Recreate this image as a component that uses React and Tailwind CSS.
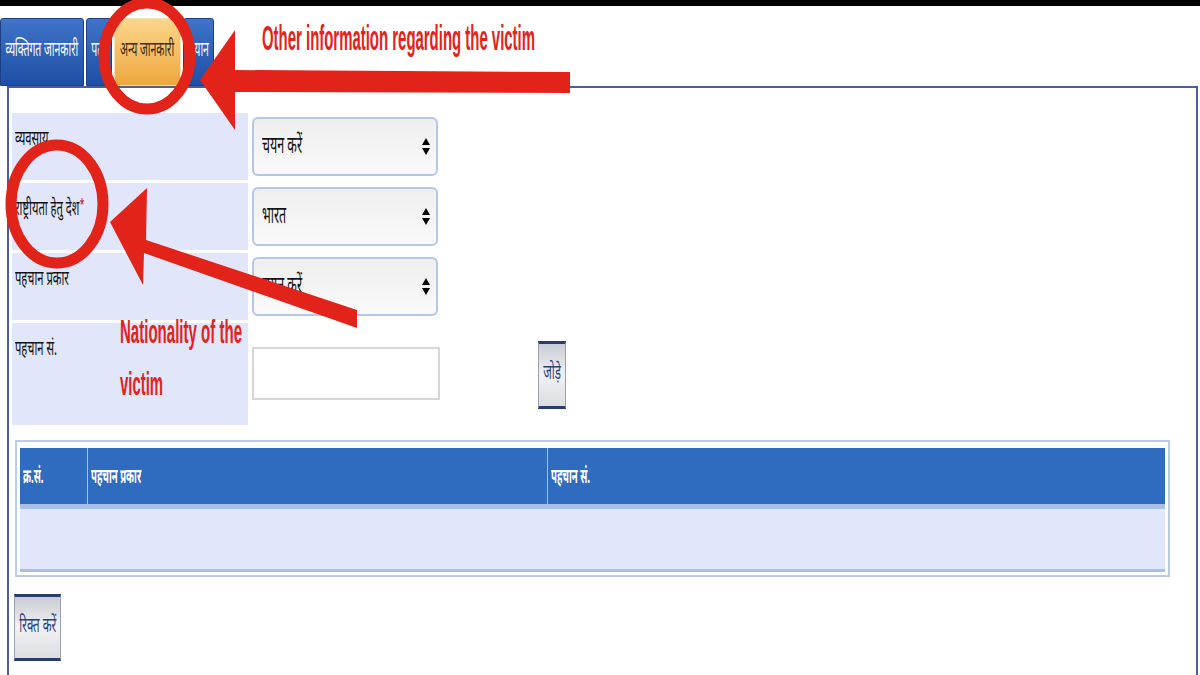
import React from 'react';

const dev = "font-['Noto_Sans_Devanagari','Lohit_Devanagari','Noto_Sans',sans-serif]";

// the capture is squeezed sideways, so Devanagari text is narrowed
function Dv({ children, center, k = 'scale-x-[0.6]' }) {
  return (
    <span className={`inline-block whitespace-nowrap ${k} ${center ? 'origin-center' : 'origin-left'}`}>
      {children}
    </span>
  );
}

function Tab({ label, active, width }) {
  return (
    <div
      className={`${width} h-[68px] shrink-0 flex items-center justify-center rounded-t-[3px] border border-[#1d3f86] text-[21px] overflow-hidden ${dev} ${
        active
          ? 'bg-gradient-to-b from-[#fbd68a] to-[#eea73a] text-[#3a2a10] border-[#f4e2b8]'
          : 'bg-gradient-to-b from-[#3f74c8] to-[#1e4fa6] text-white'
      }`}
    >
      <Dv center k="scale-x-[0.5]">{label}</Dv>
    </div>
  );
}

function SelectBox({ value }) {
  return (
    <div className="mt-[4px] ml-[4px] w-[186px] h-[59px] rounded-[6px] border-2 border-[#b4c8e6] bg-gradient-to-b from-[#eeeeee] to-[#fafafa] flex items-center justify-between pl-[8px] pr-[6px]">
      <span className={`text-[24px] text-[#111] ${dev}`}>
        <Dv k="scale-x-[0.52]">{value}</Dv>
      </span>
      <span className="flex flex-col items-center gap-[3px]">
        <span className="w-0 h-0 border-l-[4px] border-r-[4px] border-b-[7px] border-l-transparent border-r-transparent border-b-black" />
        <span className="w-0 h-0 border-l-[4px] border-r-[4px] border-t-[7px] border-l-transparent border-r-transparent border-t-black" />
      </span>
    </div>
  );
}

function Label({ children, tall }) {
  return (
    <div className={`w-[236px] shrink-0 ${tall ? 'h-[102px]' : 'h-[67px]'} bg-[#e1e6fa] pl-[3px] pt-[12px] text-[20px] text-[#111] ${dev}`}>
      <Dv k="scale-x-[0.56]">{children}</Dv>
    </div>
  );
}

function GrayButton({ label, className }) {
  return (
    <div
      className={`${className} shrink-0 flex items-center justify-center overflow-hidden border-x border-[#9aa0b0] border-y-[3px] border-y-[#2a3c6e] bg-gradient-to-b from-[#c9ccd4] via-[#f2f2f4] to-[#dcdde2] text-[21px] text-[#2a3f7a] ${dev}`}
    >
      <Dv center k="scale-x-[0.55]">{label}</Dv>
    </div>
  );
}

function Annotations() {
  const red = '#e2231a';
  const font = 'Liberation Sans Narrow, Liberation Sans, sans-serif';
  return (
    <svg className="absolute left-0 top-0 pointer-events-none" width="1200" height="675" viewBox="0 0 1200 675">
      {/* circle round the tab */}
      <ellipse cx="147" cy="56" rx="43" ry="53" fill="none" stroke={red} strokeWidth="11" />
      {/* arrow to the tab */}
      <polygon points="200,80 235,30 235,70 570,72 570,93 235,92 235,130" fill={red} />
      <text x="262" y="50" textLength="273" lengthAdjust="spacingAndGlyphs" fill={red} fontSize="35" fontWeight="700" fontFamily={font}>
        Other information regarding the victim
      </text>
      {/* circle round the label */}
      <ellipse cx="57" cy="204" rx="46" ry="59" fill="none" stroke={red} strokeWidth="11" />
      {/* arrow to the label */}
      <polygon points="110,222 147,188 146,240 357,310 357,328 144,253 143,285" fill={red} />
      <text x="120" y="343" textLength="122" lengthAdjust="spacingAndGlyphs" fill={red} fontSize="34" fontWeight="700" fontFamily={font}>
        Nationality of the
      </text>
      <text x="120" y="395" textLength="43" lengthAdjust="spacingAndGlyphs" fill={red} fontSize="34" fontWeight="700" fontFamily={font}>
        victim
      </text>
    </svg>
  );
}

export default function App() {
  return (
    <div className="relative w-[1200px] h-[675px] overflow-hidden bg-white">
      <div className="h-[6px] bg-black" />

      {/* tabs */}
      <div className="mt-[12px] h-[68px] flex items-end gap-[2px]">
        <Tab label="व्यक्तिगत जानकारी" width="w-[84px]" />
        <Tab label="पता" width="w-[26px]" />
        <Tab label="अन्य जानकारी" active width="w-[67px]" />
        <Tab label="बयान" width="w-[31px]" />
      </div>

      {/* panel */}
      <div className="ml-[7px] mr-[2px] h-[589px] border-x-2 border-t-2 border-[#4d5c9c] pl-[3px] pt-[25px]">
        <div className="flex flex-col gap-[3px]">
          <div className="flex">
            <Label>व्यवसाय</Label>
            <SelectBox value="चयन करें" />
          </div>
          <div className="flex">
            <Label>
              राष्ट्रीयता हेतु देश<span className="text-[#d0021b] text-[15px] align-top">*</span>
            </Label>
            <SelectBox value="भारत" />
          </div>
          <div className="flex">
            <Label>पहचान प्रकार</Label>
            <SelectBox value="चयन करें" />
          </div>
          <div className="flex">
            <Label tall>पहचान सं.</Label>
            <div className="ml-[4px] mt-[24px] w-[188px] h-[53px] border-2 border-[#d6d6d6] bg-white" />
            <GrayButton label="जोड़े" className="ml-[98px] mt-[18px] w-[28px] h-[68px]" />
          </div>
        </div>

        {/* table */}
        <div className="mt-[15px] ml-[3px] w-[1155px] border-2 border-[#b9cbe8] p-[3px] pt-[6px]">
          <div className={`flex h-[56px] bg-[#2f6bbf] text-white text-[20px] font-bold ${dev}`}>
            <div className="w-[68px] border-r border-[#a9c2ea] pl-[3px] pt-[15px]">
              <Dv k="scale-x-[0.48]">क्र.सं.</Dv>
            </div>
            <div className="w-[460px] border-r border-[#a9c2ea] pl-[3px] pt-[15px]">
              <Dv k="scale-x-[0.48]">पहचान प्रकार</Dv>
            </div>
            <div className="flex-1 pl-[3px] pt-[15px]">
              <Dv k="scale-x-[0.48]">पहचान सं.</Dv>
            </div>
          </div>
          <div className="h-[5px] bg-[#a9bfe4]" />
          <div className="h-[60px] bg-[#e1e6fb]" />
          <div className="h-[3px] bg-[#a9bfe4]" />
        </div>

        <GrayButton label="रिक्त करें" className="mt-[17px] ml-[2px] w-[47px] h-[67px]" />
      </div>

      <Annotations />
    </div>
  );
}
